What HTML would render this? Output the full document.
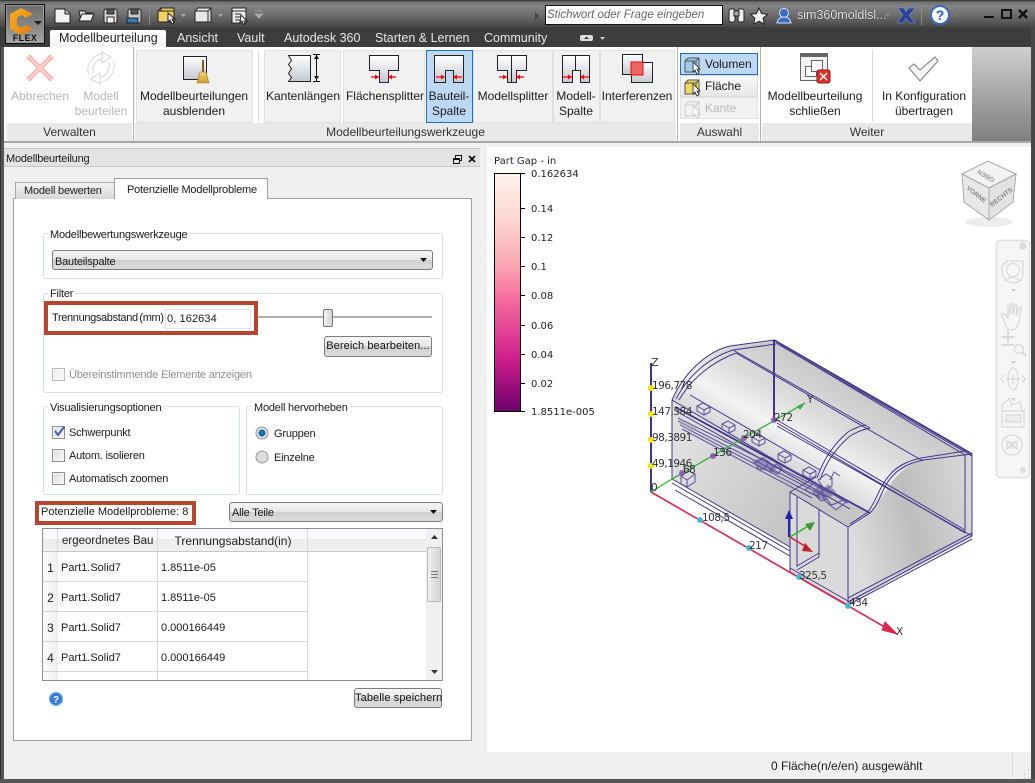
<!DOCTYPE html>
<html><head><meta charset="utf-8"><style>
html,body{margin:0;padding:0;width:1035px;height:783px;overflow:hidden;background:#f0f0f0}
body{position:relative;font:12px "Liberation Sans",sans-serif;color:#1a1a1a}
div,span.a{position:absolute;box-sizing:border-box}
.t{position:absolute;white-space:nowrap;line-height:14px;height:14px}
.c{transform:translateX(-50%)}
.g{color:#b8b8b8}
.p{font-size:11px;letter-spacing:-.2px;margin-top:1px}
.w{color:#e6e6e6;font-size:12.5px}
.btn{background:#f1f1f1;border:1px solid #e0e0e0;top:50px;height:73px}
.lab{top:123px;height:18px;background:#e9e9e9;text-align:center;line-height:18px;color:#333}
.grp{border:1px solid #d5dfe5;border-radius:3px;background:#f0f0f0}
.leg{background:#f0f0f0;padding:0 2px}
.qb{border:1px solid #7d7d7d;border-radius:3px;background:linear-gradient(#f6f6f6,#e6e6e6 50%,#d0d0d0 50%,#dcdcdc);text-align:center;line-height:18px;color:#111;white-space:nowrap;font-size:11px;letter-spacing:.1px}
.cb{width:13px;height:13px;border:1px solid #8e8e8e;background:linear-gradient(135deg,#dcdcdc,#fafafa);box-shadow:inset 0 0 0 1px #f4f4f4}
.hc{background:linear-gradient(#fafafa,#fafafa 45%,#ececec 45%,#f0f0f0);border-right:1px solid #d8d8d8;border-bottom:1px solid #c8c8c8;height:23px;top:1px}
.rh{left:1px;width:15px;height:30px;border-bottom:1px solid #d0d0d0;background:linear-gradient(90deg,#fbfbfb,#eee);text-align:center;line-height:32px}
.cl{height:30px;border-right:1px solid #d8d8d8;border-bottom:1px solid #d8d8d8;line-height:32px;padding-left:3px;background:#fff;font-size:11px}
svg{position:absolute;left:0;top:0}
.lbl{font:10.5px "DejaVu Sans",sans-serif;fill:#333;letter-spacing:-.5px}
</style></head><body>

<!-- title bar & tab bar -->
<div style="left:0;top:0;width:1035px;height:28px;background:linear-gradient(#2e2e2e 0,#6f6f6f 2px,#848484 6px,#6a6a6a 16px,#474747 27px)"></div>
<div style="left:0;top:27px;width:1035px;height:21px;background:#3d3d3d"></div>
<div style="left:0;top:47px;width:4px;height:736px;background:#565656;border-left:1px solid #333"></div>
<div style="left:1031px;top:27px;width:4px;height:756px;background:#484848"></div>
<div style="left:0;top:779px;width:1035px;height:4px;background:#565656"></div>

<!-- FLEX button -->
<div style="left:5px;top:4px;width:40px;height:40px;border:1px solid #111;background:linear-gradient(#6c6c6c,#8a8a8a 60%,#a8a8a8);box-shadow:inset 0 0 0 1px #999"></div>
<div class="t c" style="left:25px;top:31px;font-size:9px;font-weight:bold;color:#111;letter-spacing:.4px">FLEX</div>

<!-- search -->
<div style="left:545px;top:5px;width:178px;height:20px;background:#fff;border:1px solid #111"></div>
<div class="t" style="left:547px;top:8px;font-style:italic;color:#666;font-size:11.5px">Stichwort oder Frage eingeben</div>
<div class="t" style="left:797px;top:8px;color:#e8e8e8;font-size:12.5px;text-shadow:0 0 1px #000">sim360moldlsl...</div>

<!-- tabs -->
<div style="left:50px;top:30px;width:116px;height:18px;background:linear-gradient(#fff,#f2f2f2);border-radius:2px 2px 0 0"></div>
<div class="t" style="left:59px;top:31px;color:#222;font-size:12.5px">Modellbeurteilung</div>
<div class="t w" style="left:177px;top:31px">Ansicht</div>
<div class="t w" style="left:237px;top:31px">Vault</div>
<div class="t w" style="left:284px;top:31px">Autodesk 360</div>
<div class="t w" style="left:375px;top:31px">Starten &amp; Lernen</div>
<div class="t w" style="left:484px;top:31px">Community</div>

<!-- ribbon -->
<div style="left:4px;top:47px;width:968px;height:94px;background:#fff"></div>
<div style="left:972px;top:47px;width:59px;height:94px;background:linear-gradient(#cfcfcf,#7f7f7f)"></div>
<div class="btn" style="left:136px;width:117px"></div>
<div class="btn" style="left:264px;width:77px"></div>
<div class="btn" style="left:343px;width:82px"></div>
<div class="btn" style="left:473px;width:80px"></div>
<div class="btn" style="left:553px;width:47px"></div>
<div class="btn" style="left:600px;width:75px"></div>
<div class="btn" style="left:426px;width:47px;background:#bcd8f2;border:1px solid #1a6fc0"></div>
<div style="left:133px;top:47px;width:1px;height:94px;background:#b0b0b0"></div>
<div style="left:258px;top:50px;width:1px;height:72px;background:#dcdcdc"></div>
<div style="left:677px;top:47px;width:1px;height:94px;background:#b0b0b0"></div>
<div style="left:760px;top:47px;width:1px;height:94px;background:#b0b0b0"></div>
<div style="left:872px;top:50px;width:1px;height:72px;background:#dcdcdc"></div>

<div class="t c g" style="left:40px;top:89px">Abbrechen</div>
<div class="t c g" style="left:101px;top:89px">Modell</div>
<div class="t c g" style="left:101px;top:104px">beurteilen</div>
<div class="t c" style="left:194px;top:89px">Modellbeurteilungen</div>
<div class="t c" style="left:194px;top:104px">ausblenden</div>
<div class="t c" style="left:303px;top:89px">Kantenlängen</div>
<div class="t c" style="left:385px;top:89px">Flächensplitter</div>
<div class="t c" style="left:449px;top:89px">Bauteil-</div>
<div class="t c" style="left:449px;top:104px">Spalte</div>
<div class="t c" style="left:513px;top:89px">Modellsplitter</div>
<div class="t c" style="left:576px;top:89px">Modell-</div>
<div class="t c" style="left:576px;top:104px">Spalte</div>
<div class="t c" style="left:637px;top:89px">Interferenzen</div>
<div class="t c" style="left:815px;top:89px">Modellbeurteilung</div>
<div class="t c" style="left:815px;top:104px">schließen</div>
<div class="t c" style="left:924px;top:89px">In Konfiguration</div>
<div class="t c" style="left:924px;top:104px">übertragen</div>

<div style="left:680px;top:53px;width:78px;height:22px;background:#bcd8f2;border:1px solid #1a6fc0"></div>
<div style="left:680px;top:75px;width:78px;height:22px;background:linear-gradient(#fafafa,#e8e8e8);border:1px solid #dcdcdc"></div>
<div style="left:680px;top:97px;width:78px;height:22px;background:#f2f2f2;border:1px solid #e2e2e2"></div>
<div class="t" style="left:705px;top:57px">Volumen</div>
<div class="t" style="left:705px;top:79px">Fläche</div>
<div class="t g" style="left:705px;top:101px">Kante</div>

<div class="lab" style="left:7px;width:125px">Verwalten</div>
<div class="lab" style="left:135px;width:541px">Modellbeurteilungswerkzeuge</div>
<div class="lab" style="left:680px;width:79px">Auswahl</div>
<div class="lab" style="left:762px;width:210px">Weiter</div>
<div style="left:4px;top:141px;width:1027px;height:2px;background:#a8a8a8"></div>

<!-- left panel -->
<div style="left:4px;top:143px;width:483px;height:636px;background:#f0f0f0"></div>
<div style="left:4px;top:148px;width:476px;height:19px;background:#e3e3e3;border-top:1px solid #c4c4c4;border-bottom:1px solid #c8c8c8"></div>
<div class="t p" style="left:6px;top:151px">Modellbeurteilung</div>

<div style="left:13px;top:198px;width:459px;height:543px;background:#fff;border:1px solid #a0a0a0"></div>
<div style="left:15px;top:182px;width:100px;height:17px;background:linear-gradient(#f4f4f4,#d8d8d8);border:1px solid #a8a8a8;border-bottom:0"></div>
<div style="left:114px;top:178px;width:154px;height:21px;background:#fff;border:1px solid #a0a0a0;border-bottom:0"></div>
<div class="t p" style="left:24px;top:183px">Modell bewerten</div>
<div class="t p" style="left:127px;top:182px">Potenzielle Modellprobleme</div>

<div style="left:14px;top:199px;width:457px;height:541px;background:#fff"></div>

<div class="grp" style="left:43px;top:233px;width:400px;height:46px;background:#fff"></div>
<div class="t leg p" style="left:48px;top:227px;background:#fff">Modellbewertungswerkzeuge</div>
<div class="qb" style="left:52px;top:250px;width:381px;height:20px"></div>
<div class="t p" style="left:55px;top:254px">Bauteilspalte</div>

<div class="grp" style="left:43px;top:293px;width:400px;height:100px;background:#fff"></div>
<div class="t leg p" style="left:48px;top:286px;background:#fff">Filter</div>
<div style="left:258px;top:316px;width:174px;height:2px;background:#b0b0b0"></div>
<div style="left:323px;top:309px;width:10px;height:18px;border:1px solid #777;border-radius:2px;background:linear-gradient(90deg,#f8f8f8,#d0d0d0)"></div>
<div style="left:44px;top:301px;width:214px;height:34px;border:4px solid #b8452f;background:#fff"></div>
<div class="t" style="left:52px;top:311px;font-size:11px;letter-spacing:-.35px;width:113px;word-spacing:-1px">Trennungsabstand (mm)</div>
<div style="left:165px;top:309px;width:86px;height:20px;background:#fff;border:1px solid #dde3e8"></div>
<div class="t" style="left:167px;top:312px;font-size:11px;letter-spacing:.1px">0, 162634</div>
<div class="qb" style="left:324px;top:336px;width:108px;height:21px;line-height:19px">Bereich bearbeiten...</div>
<div class="cb" style="left:52px;top:368px;opacity:.6"></div>
<div class="t p" style="left:69px;top:367px;color:#8d8d8d">Übereinstimmende Elemente anzeigen</div>

<div class="grp" style="left:43px;top:406px;width:197px;height:89px;background:#fff"></div>
<div class="t leg p" style="left:48px;top:400px;background:#fff">Visualisierungsoptionen</div>
<div class="cb" style="left:52px;top:426px"></div>
<div class="t p" style="left:69px;top:425px">Schwerpunkt</div>
<div class="cb" style="left:52px;top:449px"></div>
<div class="t p" style="left:69px;top:448px">Autom. isolieren</div>
<div class="cb" style="left:52px;top:472px"></div>
<div class="t p" style="left:69px;top:471px">Automatisch zoomen</div>

<div class="grp" style="left:246px;top:406px;width:197px;height:89px;background:#fff"></div>
<div class="t leg p" style="left:252px;top:400px;background:#fff">Modell hervorheben</div>
<div class="t p" style="left:274px;top:426px">Gruppen</div>
<div class="t p" style="left:274px;top:450px">Einzelne</div>

<div style="left:35px;top:501px;width:161px;height:24px;border:4px solid #b8452f;background:#fff"></div>
<div class="t" style="left:41px;top:505px;font-size:11px">Potenzielle Modellprobleme: 8</div>
<div class="qb" style="left:229px;top:502px;width:214px;height:20px"></div>
<div class="t p" style="left:232px;top:505px">Alle Teile</div>

<!-- table -->
<div style="left:42px;top:528px;width:401px;height:153px;background:#fff;border:1px solid #8a8f96;overflow:hidden">
 <div class="hc" style="left:0;width:15px;top:0"></div>
 <div class="hc" style="left:15px;width:100px;top:0;overflow:hidden"><span class="t" style="left:4px;top:5px;color:#222;font-size:11.500px">ergeordnetes Bau</span></div>
 <div class="hc" style="left:115px;width:150px;top:0"><span class="t c" style="left:75px;top:5px;color:#222">Trennungsabstand(in)</span></div>
 <div class="hc" style="left:265px;width:118px;top:0;border-right:0"></div>
 <div class="rh" style="top:23px;left:0">1</div><div class="cl" style="left:15px;top:23px;width:100px">Part1.Solid7</div><div class="cl" style="left:115px;top:23px;width:150px">1.8511e-05</div>
 <div class="rh" style="top:53px;left:0">2</div><div class="cl" style="left:15px;top:53px;width:100px">Part1.Solid7</div><div class="cl" style="left:115px;top:53px;width:150px">1.8511e-05</div>
 <div class="rh" style="top:83px;left:0">3</div><div class="cl" style="left:15px;top:83px;width:100px">Part1.Solid7</div><div class="cl" style="left:115px;top:83px;width:150px">0.000166449</div>
 <div class="rh" style="top:113px;left:0">4</div><div class="cl" style="left:15px;top:113px;width:100px">Part1.Solid7</div><div class="cl" style="left:115px;top:113px;width:150px">0.000166449</div>
 <div class="rh" style="top:143px;left:0"></div><div class="cl" style="left:15px;top:143px;width:100px"></div><div class="cl" style="left:115px;top:143px;width:150px"></div>
 <div style="left:383px;top:0;width:16px;height:151px;background:#f0f0f0"></div>
 <div style="left:384px;top:18px;width:14px;height:55px;background:linear-gradient(90deg,#f2f2f2,#d4d4d4);border:1px solid #b8b8b8;border-radius:2px"></div>
</div>
<div class="qb" style="left:354px;top:688px;width:88px;height:20px;line-height:18px">Tabelle speichern</div>

<!-- viewport -->
<div style="left:487px;top:147px;width:544px;height:605px;background:#fff"></div>
<div style="left:4px;top:752px;width:1027px;height:27px;background:#f0f0f0"></div>
<div class="t" style="left:771px;top:759px">0 Fläche(n/e/en) ausgewählt</div>
<div style="left:1012px;top:753px;width:1px;height:24px;background:#d8d8d8"></div>

<!-- colorbar -->
<div style="left:494px;top:173px;width:27px;height:239px;border:1px solid #000;background:linear-gradient(#fff3ec 0%,#fcd9d2 18%,#faa9b4 38%,#f76ea0 52%,#cf1f8c 78%,#6e006e 100%)"></div>

<svg width="1035" height="783" viewBox="0 0 1035 783">
<defs>
<linearGradient id="dome" gradientUnits="userSpaceOnUse" x1="815" y1="365" x2="745" y2="485">
<stop offset="0" stop-color="#c9c9c9"/><stop offset=".3" stop-color="#dcdcdc"/><stop offset=".52" stop-color="#f3f3f3"/><stop offset=".75" stop-color="#d6d6d6"/><stop offset="1" stop-color="#d0d0d0"/></linearGradient>
<linearGradient id="rf" gradientUnits="userSpaceOnUse" x1="850" y1="530" x2="970" y2="500">
<stop offset="0" stop-color="#dcdcdc"/><stop offset=".5" stop-color="#bdbdbd"/><stop offset="1" stop-color="#d6d6d6"/></linearGradient>
<linearGradient id="lf" gradientUnits="userSpaceOnUse" x1="680" y1="440" x2="790" y2="510">
<stop offset="0" stop-color="#e0e0e0"/><stop offset="1" stop-color="#c6c6c6"/></linearGradient>
<linearGradient id="tb" x1="0" y1="0" x2="0" y2="1"><stop offset="0" stop-color="#fff"/><stop offset="1" stop-color="#c4c8d0"/></linearGradient>
<linearGradient id="gold" x1="0" y1="0" x2="0" y2="1"><stop offset="0" stop-color="#f6d57a"/><stop offset="1" stop-color="#cf9a30"/></linearGradient>
<linearGradient id="org" x1="0" y1="0" x2="1" y2="1"><stop offset="0" stop-color="#f9b21f"/><stop offset="1" stop-color="#e27a10"/></linearGradient>
<radialGradient id="rb" cx=".5" cy=".5" r=".5"><stop offset="0" stop-color="#0a8fc8"/><stop offset=".55" stop-color="#0c5f96"/><stop offset=".6" stop-color="#eee"/><stop offset="1" stop-color="#c8c8c8"/></radialGradient>
</defs>

<!-- colorbar ticks + labels -->
<g stroke="#000" stroke-width="1"><path d="M520 173.500H525M520 208.500H525M520 237.500H525M520 266.500H525M520 295.500H525M520 325.500H525M520 354.500H525M520 383.500H525M520 411.500H525"/></g>
<g font-family="DejaVu Sans,sans-serif" font-size="10" fill="#222">
<text x="494" y="164" font-size="10">Part Gap - in</text>
<text x="531" y="177">0.162634</text><text x="531" y="212">0.14</text><text x="531" y="241">0.12</text><text x="531" y="270">0.1</text><text x="531" y="299">0.08</text><text x="531" y="329">0.06</text><text x="531" y="358">0.04</text><text x="531" y="387">0.02</text><text x="531" y="415">1.8511e-005</text>
</g>

<!-- FLEX logo -->
<path d="M21 8 L33 14 L26 18 L21 15 L17 18 L17 25 L21 28 L26 25 L33 29 L21 35 L10 29 L10 14 Z" fill="url(#org)"/>
<path d="M34 21h8l-4 4z" fill="#1a1a1a"/>

<!-- quick access icons -->
<g stroke="#222" stroke-width="1">
<path d="M55 9h10l5 5v9H55z" fill="#f2f2f2"/><path d="M65 9v5h5" fill="#bbb"/>
<path d="M79 11h6l1 2h6v2h-8l-3 6z" fill="#ddd"/><path d="M79 21l3-7h12l-3 7z" fill="#f0f0f0"/>
<rect x="104" y="9" width="13" height="14" rx="2" fill="#ddd"/><rect x="107" y="9" width="7" height="5" fill="#555"/><rect x="107" y="17" width="7" height="6" fill="#f4f4f4"/>
<rect x="128" y="9" width="13" height="14" rx="2" fill="#ccc"/><rect x="131" y="9" width="7" height="5" fill="#555"/><rect x="127" y="18" width="11" height="5" fill="#3878b8"/>
<path d="M158 11l3-3h13v14h-16z" fill="#f0d060"/><path d="M161 8v3h-3M161 11h13" fill="none"/>
<path d="M168 13l7 6-3 0 2 4-2 1-2-4-2 2z" fill="#fff"/>
<path d="M195 11l3-3h13v14h-16z" fill="#e8e8e8"/><path d="M195 11h13v11M208 11l3-3" fill="none"/>
<rect x="232" y="8" width="14" height="15" fill="#eee"/><path d="M232 11h14M235 14h6M235 17h6M235 20h6" fill="none"/>
<path d="M241 15l6 6-3 0 1 3-2 0-1-3-2 1z" fill="#fff"/>
</g>
<path d="M181 14h5l-2.500 3zM218 14h5l-2.500 3z" fill="#aaa"/>
<path d="M255 11h8M255 14h8l-4 4z" fill="#aaa" stroke="#aaa" stroke-width=".8"/>
<rect x="149" y="5" width="1" height="20" fill="#8a8a8a"/>
<path d="M535 12l4 4-4 4z" fill="#444"/>
<!-- right of titlebar -->
<g stroke="#222" fill="#eee"><rect x="729" y="9" width="6" height="13" rx="2"/><rect x="738" y="9" width="6" height="13" rx="2"/><rect x="734" y="11" width="5" height="5" fill="#aaa"/></g>
<path d="M759 8l2.600 5.600 6 .6-4.500 4 1.200 6-5.300-3-5.300 3 1.200-6-4.500-4 6-.6z" fill="#f2f2f2" stroke="#222"/>
<circle cx="784" cy="13" r="4.500" fill="#3c6cc8" stroke="#cfe0ff"/><path d="M777 23q1-6 7-6t7 6z" fill="#3c6cc8" stroke="#cfe0ff"/>
<path d="M885 14h5l-2.500 3z" fill="#888"/>
<path d="M898 8h6l2 4 3-4h6l-6 7 6 8h-6l-3-5-3 5h-6l6-8z" fill="#27449a" stroke="#8da0d0" stroke-width=".5"/>
<rect x="921" y="5" width="1" height="20" fill="#8a8a8a"/>
<circle cx="940" cy="15" r="9" fill="#f4f7fc" stroke="#3a6dc0" stroke-width="2"/>
<text x="940" y="20" text-anchor="middle" font-family="Liberation Sans" font-weight="bold" font-size="14" fill="#2a5db0">?</text>
<path d="M954 14h5l-2.500 3z" fill="#777"/>
<rect x="984" y="16" width="10" height="2" fill="#111"/>
<rect x="1002" y="10" width="9" height="8" fill="none" stroke="#111" stroke-width="2"/>
<path d="M1019 10l8 8M1027 10l-8 8" stroke="#111" stroke-width="2.400"/>
<rect x="580" y="35" width="13" height="6" rx="2" fill="#ddd"/><path d="M584 39l2.500-2.500 2.500 2.500z" fill="#333"/>
<path d="M600 37h5l-2.500 3z" fill="#ccc"/>

<!-- ribbon icons -->
<path d="M28 56L52 80M52 56L28 80" stroke="#f3b5ae" stroke-width="5"/>
<path d="M28 56L52 80M52 56L28 80" stroke="#fbd3ce" stroke-width="2"/>
<g fill="none" stroke-linecap="butt">
<path d="M91 74 A14 14 0 0 1 103 56" stroke="#d8d8d8" stroke-width="6"/><path d="M91 74 A14 14 0 0 1 103 56" stroke="#fff" stroke-width="4"/>
<path d="M111 62 A14 14 0 0 1 99 80" stroke="#d8d8d8" stroke-width="6"/><path d="M111 62 A14 14 0 0 1 99 80" stroke="#fff" stroke-width="4"/>
</g>
<path d="M102 52l9 5-9 6zM100 84l-9-5 9-6z" fill="#fff" stroke="#d4d4d4"/>

<rect x="183.500" y="56.500" width="23" height="23" fill="url(#tb)" stroke="#222"/>
<rect x="202" y="60" width="2" height="13" fill="#8a5a20"/>
<path d="M200 72h6l3 11h-12z" fill="url(#gold)" stroke="#a87a20" stroke-width=".6"/>

<g stroke="#222" fill="url(#tb)">
<path d="M288.500 55.500h22v26h-22l3-4-3-4 3-5-3-4 3-4-3-5z"/>
<path d="M369.500 55.500h29v15h-10v12h-9v-12h-10z"/>
<path d="M434.500 55.500h29v27h-10v-12h-8v12h-11z"/>
<path d="M497.500 55.500h29v15h-10v12h-9v-12h-10z"/><path d="M511.500 55.500v27" fill="none"/>
<path d="M562.500 55.500h27v27h-9v-12h-8v12h-10z"/><path d="M575.500 55.500v15" fill="none"/>
<rect x="622.500" y="54.500" width="20" height="20"/>
<rect x="631.500" y="62.500" width="21" height="20"/>
</g>
<rect x="631" y="62" width="12" height="13" fill="#ef6464" stroke="#e01010"/>
<path d="M316.500 54v27M313 54.500h7M313 81.500h7" stroke="#111" fill="none"/><path d="M316.500 55l-2.500 4h5zM316.500 80l-2.500-4h5z" fill="#111"/>
<g stroke="#f00" fill="#f00" stroke-width="1.200">
<path d="M371 77h8M396 77h-8M436 77h8M462 77h-8M499 77h8M524 77h-8M563 77h9M589 77h-9" fill="none"/>
<path d="M379 77l-4-2.500v5zM388 77l4-2.500v5zM445 77l-4-2.500v5zM453 77l4-2.500v5zM507 77l-4-2.500v5zM516 77l4-2.500v5zM572 77l-4-2.500v5zM580 77l4-2.500v5z" stroke="none"/>
</g>

<!-- selection icons -->
<g stroke="#555"><path d="M685 61l3-3h11v14h-14z" fill="#9fd0ea"/><path d="M685 61h11v11M696 61l3-3" fill="none"/>
<path d="M685 83l3-3h11v14h-14z" fill="#f1d860"/><path d="M685 83h11v11M696 83l3-3" fill="none"/></g>
<g stroke="#ccc" fill="none"><path d="M685 105l3-3h11v14h-14z"/><path d="M685 105h11v11M696 105l3-3"/></g>
<path d="M693 62l7 7-3 0 2 4-2 1-2-4-2 2z M693 84l7 7-3 0 2 4-2 1-2-4-2 2z" fill="#fff" stroke="#222" stroke-width=".8"/>
<path d="M693 106l7 7-3 0 2 4-2 1-2-4-2 2z" fill="#fff" stroke="#ccc" stroke-width=".8"/>

<!-- close/config -->
<rect x="800.500" y="53.500" width="27" height="27" fill="#f2f2f2" stroke="#666"/><rect x="800" y="53" width="28" height="4" fill="#666"/>
<rect x="805.500" y="66.500" width="11" height="10" fill="#fafafa" stroke="#666"/><rect x="811.500" y="60.500" width="11" height="11" fill="#fafafa" stroke="#666"/>
<rect x="817" y="70" width="13" height="13" rx="2" fill="#d8342c" stroke="#a01818"/><path d="M820 73l7 7M827 73l-7 7" stroke="#fff" stroke-width="1.400"/>
<path d="M909 68l5-4 6 6 15-13 3 4-18 20z" fill="#f6f6f6" stroke="#777"/>

<!-- panel header icons -->
<rect x="455.500" y="155.500" width="6" height="5" fill="none" stroke="#111"/><rect x="453.500" y="158.500" width="6" height="5" fill="#e3e3e3" stroke="#111"/><rect x="453" y="158" width="7" height="2" fill="#111"/>
<path d="M469 155l6 6M475 155l-6 6" stroke="#111" stroke-width="1.800" transform="translate(0,1)"/>

<!-- combo arrows -->
<path d="M420 258h7l-3.500 4zM430 510h7l-3.500 4z" fill="#111"/>
<!-- check + radios -->
<path d="M55 431l3 4 6-8" fill="none" stroke="#3a5fb0" stroke-width="2"/>
<circle cx="262" cy="433" r="6" fill="url(#rb)" stroke="#999"/>
<circle cx="262" cy="457" r="6" fill="#ddd" stroke="#999"/>
<!-- scroll arrows -->
<path d="M431 539h7l-3.500-4zM431 670h7l-3.500 4z" fill="#333"/>
<path d="M431 571.500h7M431 574.500h7M431 577.500h7" stroke="#777"/>
<!-- help -->
<circle cx="56" cy="699" r="6.500" fill="#3a78d8" stroke="#7ab0f0" stroke-width="1.200"/>
<text x="56" y="703" text-anchor="middle" font-family="Liberation Sans" font-weight="bold" font-size="10" fill="#fff">?</text>

<!-- nav cube -->
<ellipse cx="989" cy="222" rx="24" ry="5" fill="#000" opacity=".07"/>
<path d="M962 174l26-13 28 13-27 14z" fill="#f2f2f2" stroke="#aaa"/>
<path d="M962 174l2 28 25 18v-32z" fill="#e8e8e8" stroke="#aaa"/>
<path d="M989 188l27-14-3 28-24 18z" fill="#e2e2e2" stroke="#aaa"/>
<text transform="translate(987,174) rotate(210)" font-family="Liberation Sans" font-weight="bold" font-size="6.500" fill="#999" text-anchor="middle">OBEN</text>
<text transform="translate(966,189) rotate(38)" font-family="Liberation Sans" font-weight="bold" font-size="6.500" fill="#888">VORNE</text>
<text transform="translate(992,207) rotate(-38)" font-family="Liberation Sans" font-weight="bold" font-size="6.500" fill="#888">RECHTS</text>

<!-- nav bar -->
<rect x="996.500" y="240.500" width="33" height="237" rx="4" fill="#f6f6f6" stroke="#e0e0e0" stroke-width="1.500"/>
<g fill="none" stroke="#d8d8d8" stroke-width="1.200">
<circle cx="1023" cy="246" r="3" fill="#ddd"/>
<path d="M1002 270q0-9 9-9h12v12q0 9-9 10h-3q-9-3-9-13z"/><circle cx="1013" cy="270" r="6.500"/><path d="M1005 281q8-8 15 0"/>
<path d="M1004 320q-3-6-3-6t4 0l3 4v-12h2v9l1-11h2v11l2-10h2l-1 11 3-8h2l-2 14q-2 8-8 8-5 0-7-10z"/>
<path d="M1008 331v12M1002 337h12M1001 345h13" stroke-width="2"/><circle cx="1019" cy="349" r="4.500"/><path d="M1022 352l4 4" stroke-width="2"/>
<ellipse cx="1013" cy="379" rx="5" ry="11"/><path d="M1005 379h16M1013 374v10"/><path d="M1004 375l-3 4 3 4M1022 375l3 4-3 4"/>
<path d="M1002 411h22v16h-22zM1002 411v-6l8-7 1 7 9-3 2 9"/><rect x="1006" y="415" width="15" height="7" fill="#eee"/>
<circle cx="1012" cy="445" r="10"/><path d="M1006 441l6 4 6-4M1006 449l6-4 6 4M1007 441v8M1017 441v8" fill="#e8e8e8"/>
</g>
<path d="M1011 289h5l-2.500 3zM1011 361h5l-2.500 3zM1011 398h5l-2.500 3z" fill="#ccc"/>
<circle cx="1023" cy="470" r="3" fill="#ddd"/>

<!-- 3D model -->
<path d="M672 400 C683 375 705 352 730 346 L774 340 L972 454 L972 536 L848 605 L790 572 L790 547 L672 479 Z" fill="#d4d4d4"/>
<path d="M673 399 C683 375 705 352 730 346 L774 340 L972 454 L965 456 L923 460 C905 465 892 480 887 490 L870 513 Z" fill="url(#dome)"/>
<path d="M672 400 L870 513 L848 527 L790 492 L790 547 L672 479 Z" fill="url(#lf)"/>
<path d="M848 527 L870 513 L887 490 C892 480 905 465 923 460 L972 454 L972 536 L848 600 Z" fill="url(#rf)"/>
<path d="M790 492 L848 527 L848 605 L790 572 Z" fill="#dadada"/>

<g fill="none" stroke="#43378c" stroke-width="1">
<path d="M672 400 C683 375 705 352 730 346 L774 340"/>
<path d="M676 399 C688 376 708 358 733 350 L776 344"/>
<path d="M679 400 C692 378 712 362 736 353"/>
<path stroke-width="1.800" d="M774 340 L972 454"/><path d="M776 343 L972 456"/>
<path d="M780 345 L965 455"/><path d="M736 353 L923 461"/><path d="M733 350 L870 428"/>
<path stroke-width="2" d="M774 340 V420"/>
<path d="M848 527 V605"/><path d="M972 454 V536"/><path d="M965 455 V532"/>
<path d="M848 527 L870 513 C880 503 882 488 890 479 C898 468 910 463 923 460 L972 454"/>
<path d="M850 524 L868 512 C876 501 880 486 888 477 C896 466 908 461 921 458 L965 451"/>
<path d="M820 480 C826 462 836 448 850 436 Q860 430 870 428 M817 478 C824 458 834 444 848 432 Q858 426 866 425"/>
<path d="M777 420 L965 530"/><path d="M777 423 L965 533"/><path d="M777 426 L972 536"/>
<path d="M848 598 L972 533"/><path d="M848 602 L972 536"/><path d="M848 605 L972 539"/>
<path d="M672 400 V479"/>
<path d="M672 479 L790 547"/><path d="M672 483 L790 551"/><path d="M675 490 L790 556"/>
<path d="M790 492 V572 L848 605"/><path d="M790 568 L848 601"/>
<path d="M797 497 V566 L819 553"/><path d="M819 510 V557 L797 570"/>
<path d="M790 492 L816 477"/><path d="M790 492 L848 527"/>
<path stroke-width="1.800" d="M675 407 L870 513"/><path d="M676 411 L850 509"/><path d="M690 395 L820 470"/><path d="M672 400 L848 503"/>
</g>
<!-- rail -->
<g fill="none" stroke="#5a4f9c" stroke-width="1">
<path d="M678 418 L830 493"/><path d="M678 421 L826 497"/><path d="M680 425 L820 498"/><path d="M682 429 L812 498"/>
</g>
<path d="M678 418 L698 428 L690 432 L680 425 Z" fill="#a8a8b4" opacity=".6"/>
<g fill="none" stroke="#5a4f9c" stroke-width="1">
<path d="M697 406l6-3 7 4v5l-6 3-7-4zM697 406l7 4v5M704 410l6-3"/>
<path d="M722 424l6-3 7 4v5l-6 3-7-4zM722 424l7 4v5M729 428l6-3"/>
<path d="M752 437l6-3 7 4v5l-6 3-7-4zM752 437l7 4v5M759 441l6-3"/>
<path d="M778 454l6-3 7 4v5l-6 3-7-4zM778 454l7 4v5M785 458l6-3"/>
<path d="M803 470l6-3 7 4v5l-6 3-7-4zM803 470l7 4v5M810 474l6-3"/>
<path d="M681 476l8-5 6 3v8l-8 5-6-3z M681 476l6 4v7M687 480l8-6"/>
<path d="M755 463l8-5 6 4-4 6-6 2zM770 470l6-6 6 4-4 6z"/>
<path d="M818 480l8-6 6 4v8l-7 4zM805 490l10-8 8 8-6 6zM822 488l14 8 10 6-10 8-12-10z"/>
<path d="M815 495l6 6 6-2 4 6 6-2 8-4M830 480l4-8 6 4"/>
</g>
<path d="M812 492l6-6 6 2 4-4 8 8-4 4-8 4-6-2zM752 461l10-4 16 10-6 6-12-4z" fill="#5a4f9c" opacity=".5"/>

<!-- axes -->
<path d="M651 492 L895 633" stroke="#d9274e" stroke-width="1.600"/>
<path d="M885 622 L897 634 L882 630 Z" fill="#d9274e" stroke="#d9274e"/>
<path d="M651 492 V363" stroke="#3d3390" stroke-width="2"/>
<path d="M651 492 L672 479" stroke="#22bb22" stroke-width="1.200"/>
<path d="M672 479 L805 403" stroke="#3cb043" stroke-width="1.300"/>
<path d="M797 406 L805 403 L800 410 Z" fill="#3cb043"/>
<g fill="#f5ee00" stroke="#e8d800"><circle cx="651" cy="388" r="2.500"/><circle cx="651" cy="414" r="2.500"/><circle cx="651" cy="440" r="2.500"/><circle cx="651" cy="466" r="2.500"/></g>
<g fill="#25c4d4" stroke="#7ad"><circle cx="700" cy="520" r="2.500"/><circle cx="749" cy="548" r="2.500"/><circle cx="799" cy="577" r="2.500"/><circle cx="848" cy="606" r="2.500"/></g>
<g fill="#8a4fb0" opacity=".85"><circle cx="682" cy="473" r="3"/><circle cx="713" cy="456" r="3"/><circle cx="744" cy="438" r="3"/><circle cx="774" cy="420" r="3"/></g>

<!-- local triad -->
<path d="M789 537 V518" stroke="#2222b0" stroke-width="2"/><path d="M785 519 L789 510 L793 519 Z" fill="#2222b0"/>
<path d="M790 537 L810 525" stroke="#22bb22" stroke-width="1.500"/><path d="M805 524 L815 522 L810 531 Z" fill="#3a9a30"/>
<path d="M790 537 L808 548" stroke="#d02030" stroke-width="1.500"/><path d="M805 543 L813 552 L802 551 Z" fill="#c02030"/>

<g class="lbl">
<text x="651" y="366" font-size="11">Z</text>
<text x="807" y="403">Y</text>
<text x="896" y="635">X</text>
<text x="652" y="389">196,778</text>
<text x="652" y="415">147,584</text>
<text x="652" y="441">98,3891</text>
<text x="652" y="467">49,1946</text>
<text x="651" y="491">0</text>
<text x="683" y="473">68</text>
<text x="713" y="456">136</text>
<text x="743" y="438">204</text>
<text x="774" y="421">272</text>
<text x="702" y="521">108,5</text>
<text x="749" y="549">217</text>
<text x="799" y="579">325,5</text>
<text x="849" y="606">434</text>
</g>
<path d="M1024 778h1M1028 778h1M1028 774h1M1024 774h1M1028 770h1" stroke="#aaa"/>
</svg>
</body></html>
